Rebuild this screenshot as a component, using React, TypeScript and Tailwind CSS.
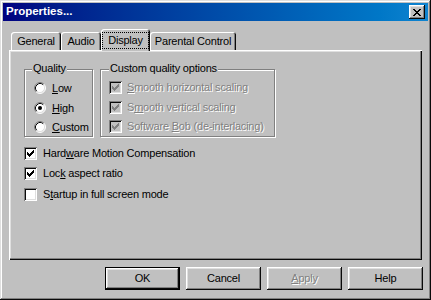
import type { ReactNode } from "react";

const raised =
  "shadow-[inset_-1px_-1px_#0a0a0a,inset_1px_1px_#ffffff,inset_-2px_-2px_#808080,inset_2px_2px_#dfdfdf]";
const sunken =
  "shadow-[inset_1px_1px_#808080,inset_-1px_-1px_#ffffff,inset_2px_2px_#0a0a0a,inset_-2px_-2px_#dfdfdf]";
const etched = "border border-[#808080] shadow-[inset_1px_1px_#ffffff,1px_1px_#ffffff]";
const disabledText = "text-[#808080] [text-shadow:1px_1px_#ffffff]";

const CheckBox = ({ checked, disabled }: { checked?: boolean; disabled?: boolean }) => (
  <span
    className={`flex h-[13px] w-[13px] shrink-0 items-center justify-center ${sunken} ${
      disabled ? "bg-[#c0c0c0]" : "bg-white"
    }`}
  >
    {checked && (
      <svg width="7" height="7" viewBox="0 0 7 7" shapeRendering="crispEdges">
        <path
          d="M0 2h1v3H0z M1 3h1v3H1z M2 4h1v3H2z M3 3h1v3H3z M4 2h1v3H4z M5 1h1v3H5z M6 0h1v3H6z"
          fill={disabled ? "#808080" : "#000000"}
        />
      </svg>
    )}
  </span>
);

const Radio = ({ checked }: { checked?: boolean }) => (
  <svg width="12" height="12" viewBox="0 0 12 12" className="shrink-0">
    <circle cx="6" cy="6" r="5" fill="#ffffff" />
    <path d="M2.11 9.89 A5.5 5.5 0 0 1 9.89 2.11" stroke="#808080" fill="none" />
    <path d="M9.89 2.11 A5.5 5.5 0 0 1 2.11 9.89" stroke="#ffffff" fill="none" />
    <path d="M2.82 9.18 A4.5 4.5 0 0 1 9.18 2.82" stroke="#0a0a0a" fill="none" />
    <path d="M9.18 2.82 A4.5 4.5 0 0 1 2.82 9.18" stroke="#dfdfdf" fill="none" />
    {checked && <circle cx="6" cy="6" r="2" fill="#000000" />}
  </svg>
);

const Tab = ({ label, width, selected }: { label: string; width: string; selected?: boolean }) => (
  <div
    className={`flex justify-center rounded-t-[3px] bg-[#c0c0c0] shadow-[inset_1px_1px_#ffffff,inset_-1px_0_#0a0a0a,inset_-2px_0_#808080] ${width} ${
      selected ? "relative z-10 -mb-px h-[22px] pt-[3px]" : "h-[18px] items-center"
    }`}
  >
    {selected ? (
      <span className="h-[17px] border border-dotted border-black px-[5px] leading-[14px]">{label}</span>
    ) : (
      <span className="leading-[13px]">{label}</span>
    )}
  </div>
);

const Button = ({ children, isDefault }: { children: ReactNode; isDefault?: boolean }) => (
  <button
    className={`flex h-[23px] w-[75px] items-center justify-center bg-[#c0c0c0] ${
      isDefault ? "border border-black" : ""
    } ${raised}`}
  >
    {children}
  </button>
);

export default function App() {
  return (
    <div className="h-[300px] w-[431px] overflow-hidden bg-[#c0c0c0] font-['Liberation_Sans',Arial,sans-serif] text-[11px] tracking-[-0.2px] text-black">
      <div className="flex h-full flex-col p-[3px] shadow-[inset_-1px_-1px_#0a0a0a,inset_1px_1px_#dfdfdf,inset_-2px_-2px_#808080,inset_2px_2px_#ffffff]">
        {/* title bar */}
        <div className="flex h-[18px] items-center justify-between bg-linear-to-r from-[#000080] to-[#1084d0] pl-[3px] pr-[3px]">
          <span className="text-[11.5px] font-bold tracking-normal text-white">Properties...</span>
          <button className={`flex h-[14px] w-[16px] items-center justify-center bg-[#c0c0c0] ${raised}`}>
            <svg width="8" height="7" viewBox="0 0 8 7" shapeRendering="crispEdges">
              <path
                d="M0 0h2v1H0z M6 0h2v1H6z M1 1h2v1H1z M5 1h2v1H5z M2 2h4v1H2z M3 3h2v1H3z M2 4h4v1H2z M1 5h2v1H1z M5 5h2v1H5z M0 6h2v1H0z M6 6h2v1H6z"
                fill="#000000"
              />
            </svg>
          </button>
        </div>

        {/* tabs */}
        <div className="mt-[8px] flex h-[21px] items-end pl-[8px]">
          <Tab label="General" width="w-[50px]" />
          <Tab label="Audio" width="w-[40px]" />
          <Tab label="Display" width="w-[49px]" selected />
          <Tab label="Parental Control" width="w-[86px]" />
        </div>

        {/* panel */}
        <div className="mx-[6px] flex h-[210px] flex-col pl-[15px] pt-[19px] shadow-[inset_1px_1px_#ffffff,inset_-1px_-1px_#0a0a0a,inset_-2px_-2px_#808080,inset_2px_2px_#dfdfdf]">
          <div className="flex">
            <div className={`relative h-[68px] w-[69px] ${etched}`}>
              <span className="absolute -top-[8px] left-[7px] bg-[#c0c0c0] px-px leading-[13px]">Quality</span>
              <div className="flex flex-col pl-[9px] pt-[12px]">
                <div className="flex h-[12px] items-center gap-[6px]">
                  <Radio />
                  <span><u>L</u>ow</span>
                </div>
                <div className="mt-[8px] flex h-[12px] items-center gap-[6px]">
                  <Radio checked />
                  <span><u>H</u>igh</span>
                </div>
                <div className="mt-[7px] flex h-[12px] items-center gap-[6px]">
                  <Radio />
                  <span><u>C</u>ustom</span>
                </div>
              </div>
            </div>

            <div className={`relative ml-[7px] h-[68px] w-[175px] ${etched}`}>
              <span className="absolute -top-[8px] left-[8px] bg-[#c0c0c0] px-px leading-[13px]">
                Custom quality options
              </span>
              <div className="flex flex-col pl-[8px] pt-[11px]">
                <div className="flex h-[13px] items-center gap-[5px]">
                  <CheckBox checked disabled />
                  <span className={disabledText}><u>S</u>mooth horizontal scaling</span>
                </div>
                <div className="mt-[7px] flex h-[13px] items-center gap-[5px]">
                  <CheckBox checked disabled />
                  <span className={disabledText}>S<u>m</u>ooth vertical scaling</span>
                </div>
                <div className="mt-[6px] flex h-[13px] items-center gap-[5px]">
                  <CheckBox checked disabled />
                  <span className={disabledText}>Software <u>B</u>ob (de-interlacing)</span>
                </div>
              </div>
            </div>
          </div>

          <div className="mt-[10px] flex h-[13px] items-center gap-[6px]">
            <CheckBox checked />
            <span>Hard<u>w</u>are Motion Compensation</span>
          </div>
          <div className="mt-[7px] flex h-[13px] items-center gap-[6px]">
            <CheckBox checked />
            <span>Loc<u>k</u> aspect ratio</span>
          </div>
          <div className="mt-[8px] flex h-[13px] items-center gap-[6px]">
            <CheckBox />
            <span>S<u>t</u>artup in full screen mode</span>
          </div>
        </div>

        {/* buttons */}
        <div className="mt-[7px] flex justify-end gap-[6px] pr-[5px]">
          <Button isDefault>OK</Button>
          <Button>Cancel</Button>
          <Button>
            <span className={disabledText}><u>A</u>pply</span>
          </Button>
          <Button>Help</Button>
        </div>
      </div>
    </div>
  );
}
